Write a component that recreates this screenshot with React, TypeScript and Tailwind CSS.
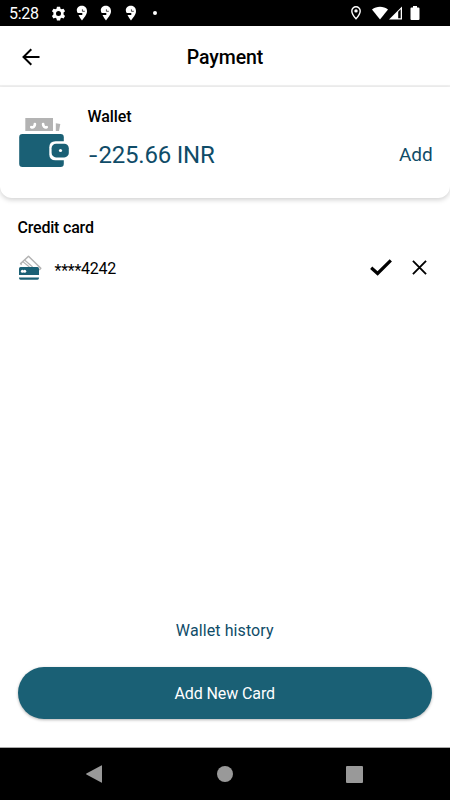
type IconProps = {
  className?: string
}

function GearIcon({ className }: IconProps) {
  return (
    <svg viewBox="0 0 24 24" fill="currentColor" className={className}>
      <path
        fillRule="evenodd"
        d="M9.500 1h5l.7 3.200 1.800 1 3.100-1 2.400 4-2.400 2.200v3.200l2.400 2.200-2.400 4-3.100-1-1.800 1-.7 3.200h-5l-.7-3.200-1.800-1-3.100 1-2.400-4 2.400-2.200v-3.200L1.500 8.200l2.400-4 3.100 1 1.800-1L9.500 1ZM12 8a4 4 0 1 0 0 8 4 4 0 0 0 0-8Z"
      />
    </svg>
  )
}

function DeliveryIcon({ className }: IconProps) {
  return (
    <svg viewBox="0 0 12 16" className={className}>
      <path d="M6 .8C2.900.8.8 2.700.8 5.300c0 1.100.4 2 .9 2.700h4.600v1.900H2.500C3.500 11.800 4.800 13.900 6 15.400c2.200-2.600 4.700-5.900 5-8.400.3-3.700-1.900-6.200-5-6.200Z" fill="currentColor" />
      <path d="M6.400 4.300v2h2.400" fill="none" stroke="#000" strokeWidth=".7" />
    </svg>
  )
}

function PinIcon({ className }: IconProps) {
  return (
    <svg viewBox="0 0 12 16" className={className}>
      <path
        d="M6 1.700a4.200 4.200 0 0 0-4.200 4.200C1.800 9 6 13.800 6 13.800S10.200 9 10.200 5.900A4.200 4.200 0 0 0 6 1.700Z"
        fill="none"
        stroke="currentColor"
        strokeWidth="1.400"
      />
      <circle cx="6" cy="5.900" r="1.700" fill="currentColor" />
    </svg>
  )
}

function WalletIcon({ className }: IconProps) {
  return (
    <svg viewBox="0 0 50 50" className={className}>
      <path d="M6.300 1H34v13H6.300z" fill="#b3b3b3" />
      <path d="M36.800 6.300 41.300 7 40 14h-3.200z" fill="#b3b3b3" />
      <path d="M12.300 10.200c2 .6 3.600-.8 3.600-3.200M24.100 7c0 2.400 1.600 3.800 3.600 3.200" fill="none" stroke="#fff" strokeWidth="2.700" strokeLinecap="round" />
      <rect x="0.200" y="17" width="44.600" height="33" rx="3.200" fill="#1a6075" />
      <path d="M50 24.200H36.500q-6.200 0-6.200 6v7q0 6 6.200 6H50z" fill="#fff" />
      <rect x="32.600" y="26.800" width="17.200" height="13.600" rx="4.500" fill="#1a6075" />
      <circle cx="41.500" cy="33.500" r="1.600" fill="#fff" />
    </svg>
  )
}

function CardIcon({ className }: IconProps) {
  return (
    <svg viewBox="0 0 24 26" className={className}>
      <path
        d="M3.600 9.800 2.600 8.600 10.500 1.200 22.800 13.200 21.200 15"
        fill="none"
        stroke="#b3b3b3"
        strokeWidth="1.500"
        strokeLinejoin="round"
      />
      <path d="m4.800 6.600 6.600 5.400M6.600 5l8 7" fill="none" stroke="#b3b3b3" strokeWidth="1.200" />
      <path d="M1 13.500Q1 12 2.500 12h17q1.500 0 1.500 1.500V20H1z" fill="#1a6075" />
      <path d="M1 22.500h20v.6q0 1.700-1.500 1.700h-17Q1 24.800 1 23.100z" fill="#1a6075" />
      <circle cx="4.400" cy="16.300" r="1.500" fill="#fff" />
      <circle cx="6.700" cy="16.300" r="1.500" fill="#fff" />
    </svg>
  )
}

function StatusBar() {
  return (
    <div className="flex h-[26px] shrink-0 items-center bg-black pr-[30px] pl-[9px] text-white">
      <span className="w-[42px] pt-0.5 text-[16px] leading-[26px] tracking-[-0.3px]">5:28</span>
      <GearIcon className="h-[15px] w-[15px]" />
      <DeliveryIcon className="ml-[10px] h-[16px] w-[12px]" />
      <DeliveryIcon className="ml-[12px] h-[16px] w-[12px]" />
      <DeliveryIcon className="ml-[13px] h-[16px] w-[12px]" />
      <span className="ml-[16px] h-1 w-1 rounded-full bg-white" />
      <PinIcon className="ml-auto h-4 w-3" />
      <svg viewBox="0 0 16 14" fill="currentColor" className="ml-[10px] h-[14px] w-4">
        <path d="M0 3.500C4.500-.3 11.500-.3 16 3.500L8 13.500z" />
      </svg>
      <svg viewBox="0 0 13 14" className="ml-[1px] h-[14px] w-[13px]">
        <path d="M0 13.500 13 .5v13z" fill="#fff" />
        <path d="M9.200 5.800 11.700 3.300v9H9.200z" fill="#000" />
      </svg>
      <svg viewBox="0 0 10 14" fill="currentColor" className="ml-[8px] h-[14px] w-[10px]">
        <path d="M3 0h4v1.500h1.500q1 0 1 1V13q0 1-1 1h-7q-1 0-1-1V2.500q0-1 1-1H3z" />
      </svg>
    </div>
  )
}

function NavigationBar() {
  return (
    <div className="flex h-[53px] shrink-0 items-center justify-between border-t border-[#a9a9a9] bg-black pr-[87px] pl-[86px] text-[#999]">
      <svg viewBox="0 0 16 18" fill="currentColor" className="h-[18px] w-4">
        <path d="M16 .8v16.400q0 .8-.7.400L.4 9.400q-.6-.4 0-.8L15.300.4q.7-.4.7.4z" />
      </svg>
      <span className="ml-0.5 h-4 w-4 rounded-full bg-[#999]" />
      <span className="h-[17px] w-[17px] rounded-[1px] bg-[#999]" />
    </div>
  )
}

export default function App() {
  return (
    <div className="flex h-[800px] w-[450px] flex-col overflow-hidden bg-white font-['Roboto',sans-serif] text-black">
      <StatusBar />

      <header className="flex h-[61px] shrink-0 items-center border-b-2 border-[#f1f1f1] px-[22px]">
        <button type="button" aria-label="Back" className="pt-0.5">
          <svg viewBox="0 0 18 18" fill="none" stroke="currentColor" strokeWidth="2" className="h-[18px] w-[18px]">
            <path d="M17.500 9H1.500M9.300 1.200 1.500 9l7.800 7.800" />
          </svg>
        </button>
        <h1 className="flex-1 pt-1 pr-[18px] text-center text-[19.5px] font-medium tracking-[-0.1px]">Payment</h1>
      </header>

      <section className="flex h-[111px] shrink-0 rounded-b-xl bg-white pr-[17.5px] pl-[19px] shadow-[0_2px_5px_rgba(0,0,0,0.18)]">
        <WalletIcon className="mt-[30px] h-[50px] w-[50px]" />
        <div className="ml-[18.5px] flex-1 pt-[20px]">
          <h2 className="text-base leading-5 font-medium tracking-[-0.1px]">Wallet</h2>
          <div className="mt-[13px] flex items-center justify-between text-[#0f4c68]">
            <span className="pl-px text-[24px] leading-[30px] tracking-[-0.2px]">
              <span className="mr-[3.5px] inline-block origin-left scale-x-125">-</span>225.66 INR
            </span>
            <button type="button" className="text-[19px] leading-[30px] tracking-[-0.1px]">
              Add
            </button>
          </div>
        </div>
      </section>

      <section className="px-[17.5px] pt-[20px]">
        <h2 className="text-base leading-5 font-medium tracking-[-0.2px]">Credit card</h2>
        <div className="mt-[16px] flex h-[28px] items-center">
          <CardIcon className="h-[26px] w-6" />
          <span className="ml-[13px] pt-0.5 text-base tracking-[-0.25px]">
            <span className="inline-block translate-y-0.5">****</span>4242
          </span>
          <svg viewBox="0 0 22 17" fill="none" stroke="currentColor" strokeWidth="3.200" className="mb-px ml-auto h-[17px] w-[22px]">
            <path d="M1.200 8.800 7.600 14.500 20.800 1.300" />
          </svg>
          <svg viewBox="0 0 16 16" fill="none" stroke="currentColor" strokeWidth="2" className="mr-[5.500px] mb-px ml-[20px] h-[15px] w-[15px]">
            <path d="m1 1 14 14M15 1 1 15" />
          </svg>
        </div>
      </section>

      <div className="mt-auto flex flex-col items-center pr-[18px] pb-[28px] pl-[17.5px]">
        <button type="button" className="text-base leading-6 tracking-[0.1px] text-[#0f4c68]">
          Wallet history
        </button>
        <button
          type="button"
          className="mt-[24px] h-[52px] w-full rounded-full bg-[#1a6075] pt-0.5 text-base tracking-[-0.1px] text-white shadow-[0_1px_3px_rgba(0,0,0,0.3)]"
        >
          Add New Card
        </button>
      </div>

      <NavigationBar />
    </div>
  )
}
